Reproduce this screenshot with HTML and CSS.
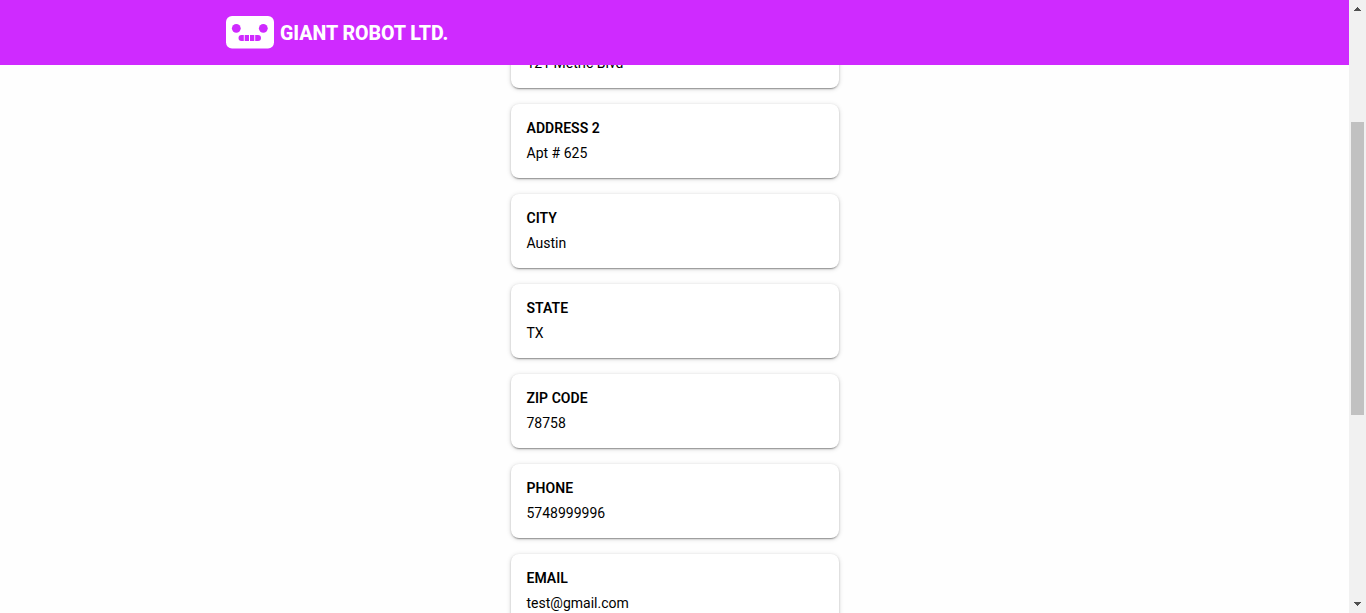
FILE: index.html
```html
<!DOCTYPE html>
<html lang="en">
<head>
<meta charset="utf-8">
<title>Giant Robot Ltd.</title>
<link rel="stylesheet" href="styles.css">
</head>
<body>
<div class="page">
  <header class="header">
    <svg class="logo" width="48" height="33" viewBox="0 0 48 33">
      <rect width="48" height="32.5" rx="6" fill="#fff"/>
      <g fill="#cf2aff">
        <circle cx="10.3" cy="12.3" r="4.4"/>
        <circle cx="37.3" cy="12.3" r="4.4"/>
        <path d="M15.5 19H17.8v6h-2.3a3 3 0 0 1 0-6zM18.7 19H23v6h-4.3zM24 19h4.3v6H24zM29.2 19H32a3 3 0 0 1 0 6h-2.8z"/>
      </g>
    </svg>
    <span class="brand">GIANT ROBOT LTD.</span>
  </header>
  <main class="content">
    <div class="cards">
      <section class="card"><h2 class="label">ADDRESS 1</h2><p class="value">121 Metric Blvd</p></section>
      <section class="card"><h2 class="label">ADDRESS 2</h2><p class="value">Apt # 625</p></section>
      <section class="card"><h2 class="label">CITY</h2><p class="value">Austin</p></section>
      <section class="card"><h2 class="label">STATE</h2><p class="value">TX</p></section>
      <section class="card"><h2 class="label">ZIP CODE</h2><p class="value">78758</p></section>
      <section class="card"><h2 class="label">PHONE</h2><p class="value">5748999996</p></section>
      <section class="card"><h2 class="label">EMAIL</h2><p class="value">test@gmail.com</p></section>
    </div>
  </main>
</div>
<div class="scrollbar">
  <svg class="arrow" width="17" height="17" shape-rendering="crispEdges"><path fill="#505050" d="M8 7h1v1h1v1h1v1h1v1H5v-1h1V9h1V8h1z"/></svg>
  <div class="track"><div class="thumb"></div></div>
  <svg class="arrow" width="17" height="17" shape-rendering="crispEdges"><path fill="#505050" d="M5 6h7v1h-1v1h-1v1H9v1H8V9H7V8H6V7H5z"/></svg>
</div>
</body>
</html>
```

FILE: styles.css
```css
* { box-sizing: border-box; }

body {
  margin: 0;
  height: 613px;
  display: flex;
  overflow: hidden;
  background: #fefefe;
  color: #000;
  font-family: Roboto, "Liberation Sans", sans-serif;
}

.page {
  flex: 1;
  display: flex;
  flex-direction: column;
}

.header {
  flex: none;
  height: 65px;
  padding: 0 226px 1px;
  display: flex;
  align-items: center;
  gap: 6px;
  background: #cf2aff;
}

.logo { display: block; }

.brand {
  color: #fff;
  font-size: 19.6px;
  font-weight: 800;
  letter-spacing: -0.05px;
  line-height: 24px;
  padding-top: 4px;
}

.content {
  flex: 1;
  min-height: 0;
  overflow: hidden;
}

.cards {
  width: 328px;
  margin: -51px auto 0;
  display: flex;
  flex-direction: column;
  gap: 16px;
}

.card {
  height: 74px;
  padding: 16px;
  border-radius: 8px;
  background: #fff;
  box-shadow: 0 3px 1px -2px rgba(0, 0, 0, 0.2), 0 1px 2px rgba(0, 0, 0, 0.22), 0 1px 5px rgba(0, 0, 0, 0.16);
}

.label,
.value {
  margin: 0;
  font-size: 14px;
  line-height: 16px;
}

.label {
  font-weight: 600;
  letter-spacing: 0.05px;
}

.value {
  margin-top: 9px;
  font-weight: 400;
}

.scrollbar {
  flex: none;
  width: 17px;
  display: flex;
  flex-direction: column;
  background: #f1f1f1;
}

.arrow {
  display: block;
  flex: none;
}

.track {
  flex: 1;
  padding: 105px 2px 0;
}

.thumb {
  height: 293px;
  background: #c1c1c1;
}
```
